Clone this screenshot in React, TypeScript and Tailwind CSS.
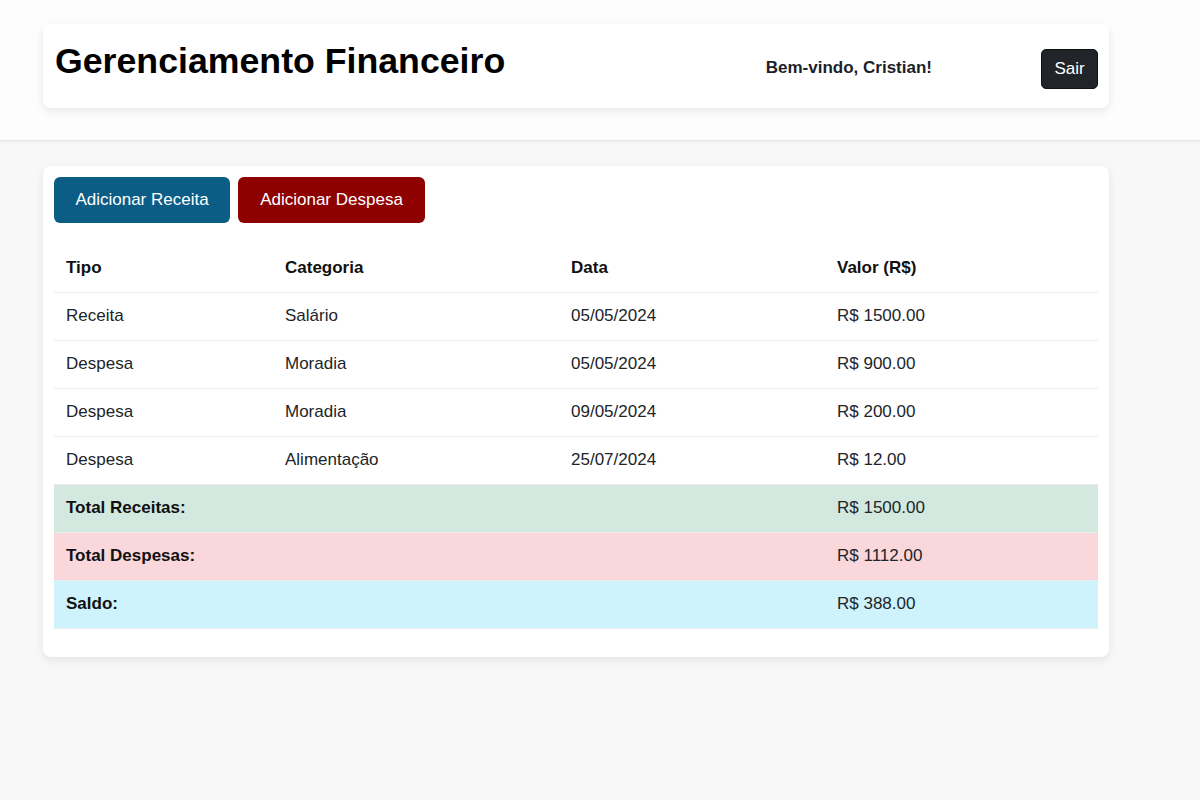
import React from "react";

const rows = [
  { tipo: "Receita", cat: "Salário", data: "05/05/2024", valor: "R$ 1500.00" },
  { tipo: "Despesa", cat: "Moradia", data: "05/05/2024", valor: "R$ 900.00" },
  { tipo: "Despesa", cat: "Moradia", data: "09/05/2024", valor: "R$ 200.00" },
  { tipo: "Despesa", cat: "Alimentação", data: "25/07/2024", valor: "R$ 12.00" },
];

const totals = [
  { label: "Total Receitas:", valor: "R$ 1500.00", bg: "bg-[#d3e8de]" },
  { label: "Total Despesas:", valor: "R$ 1112.00", bg: "bg-[#f9d7da]" },
  { label: "Saldo:", valor: "R$ 388.00", bg: "bg-[#cff3fc]" },
];

export default function App() {
  return (
    <div
      className="min-h-[800px] w-[1200px] bg-[#f8f8f8] text-[#212529]"
      style={{ fontFamily: '"Liberation Sans", Arial, sans-serif' }}
    >
      <header className="h-[141px] bg-[#fdfdfd] border-b border-[#e6e6e6] shadow-[0_1px_3px_rgba(0,0,0,0.04)] pt-[24px] pl-[43px]">
        <div className="w-[1066px] h-[84px] bg-white rounded-[8px] shadow-[0_3px_10px_rgba(0,0,0,0.09)] flex items-start pl-[12px] pr-[11px]">
          <h1 className="mt-[16px] text-[35.7px] leading-[43px] font-bold text-black">
            Gerenciamento Financeiro
          </h1>
          <div className="flex-1" />
          <span className="mt-[34px] text-[17px] font-bold text-[#1c1f2a] leading-[20px] mr-[109px] whitespace-nowrap">
            Bem-vindo, Cristian!
          </span>
          <button className="mt-[25px] h-[40px] w-[57px] rounded-[5px] bg-[#212529] text-white text-[17px] border border-[#111]">
            Sair
          </button>
        </div>
      </header>

      <main className="pt-[25px] pl-[43px]">
        <div className="w-[1066px] bg-white rounded-[8px] shadow-[0_3px_10px_rgba(0,0,0,0.09)] pt-[11px] px-[11px] pb-[28px]">
          <div className="flex gap-[8px]">
            <button className="h-[46px] w-[176px] rounded-[6px] bg-[#0c5d86] text-white text-[17px]">
              Adicionar Receita
            </button>
            <button className="h-[46px] w-[187px] rounded-[6px] bg-[#8e0101] text-white text-[17px]">
              Adicionar Despesa
            </button>
          </div>

          <table className="mt-[21px] w-[1044px] border-collapse text-[17px] table-fixed">
            <colgroup>
              <col className="w-[219px]" />
              <col className="w-[286px]" />
              <col className="w-[266px]" />
              <col className="w-[273px]" />
            </colgroup>
            <thead>
              <tr className="h-[48px] border-b border-[#ececec]">
                <th className="text-left font-bold px-[12px] text-[#111]">Tipo</th>
                <th className="text-left font-bold px-[12px] text-[#111]">Categoria</th>
                <th className="text-left font-bold px-[12px] text-[#111]">Data</th>
                <th className="text-left font-bold px-[12px] text-[#111]">Valor (R$)</th>
              </tr>
            </thead>
            <tbody>
              {rows.map((r, i) => (
                <tr key={i} className="h-[48px] border-b border-[#ececec]">
                  <td className="px-[12px]">{r.tipo}</td>
                  <td className="px-[12px]">{r.cat}</td>
                  <td className="px-[12px]">{r.data}</td>
                  <td className="px-[12px]">{r.valor}</td>
                </tr>
              ))}
              {totals.map((t, i) => (
                <tr key={i} className={`h-[48px] border-b border-[#e8eef0] ${t.bg}`}>
                  <td colSpan={3} className="px-[12px] font-bold text-[#111]">
                    {t.label}
                  </td>
                  <td className="px-[12px]">{t.valor}</td>
                </tr>
              ))}
            </tbody>
          </table>
        </div>
      </main>
    </div>
  );
}
